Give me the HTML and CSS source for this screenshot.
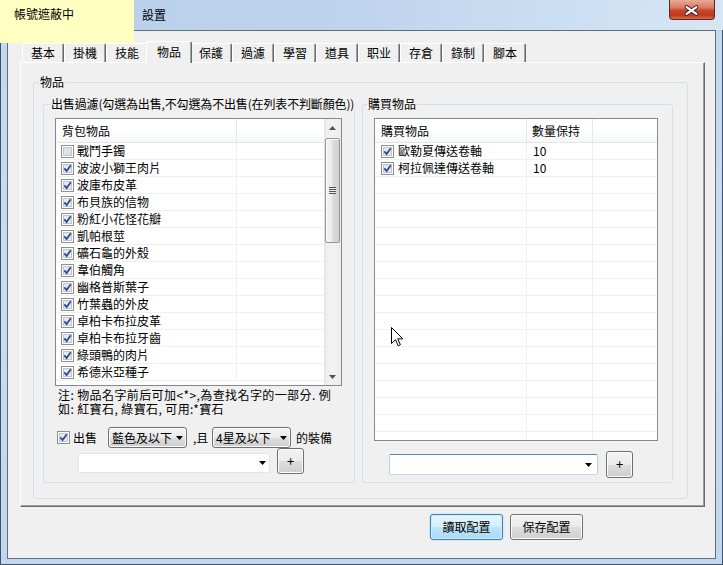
FILE: index.html
```html
<!DOCTYPE html>
<html>
<head>
<meta charset="utf-8">
<link rel="stylesheet" href="styles.css">
</head>
<body>
<div class="window">
  <div class="mask">帳號遮蔽中</div>
  <div class="titlebar">
    <span class="title">設置</span>
    <span class="close"><svg width="46" height="20" viewBox="0 0 46 20"><path d="M18 7 L28 14 M28 7 L18 14" stroke="#3a2020" stroke-width="4" stroke-linecap="round"/><path d="M18 7 L28 14 M28 7 L18 14" stroke="#fff" stroke-width="2.2" stroke-linecap="round"/></svg></span>
  </div>
  <div class="client">
    <div class="tabs">
      <div class="tab">基本</div>
      <div class="tab">掛機</div>
      <div class="tab">技能</div>
      <div class="tab active">物品</div>
      <div class="tab">保護</div>
      <div class="tab">過濾</div>
      <div class="tab">學習</div>
      <div class="tab">道具</div>
      <div class="tab">职业</div>
      <div class="tab">存倉</div>
      <div class="tab">錄制</div>
      <div class="tab">腳本</div>
    </div>
    <div class="panel">
      <fieldset class="group outer">
        <legend class="lg-outer">物品</legend>
        <div class="outer-body">
          <fieldset class="group sell">
            <legend class="lg-sell">出售過濾(勾選為出售,不勾選為不出售(在列表不判斷顏色))</legend>
            <div class="sell-body">
              <div class="lv lv-left">
                <div class="lv-main">
                  <div class="lv-head cols-left"><div class="c">背包物品</div><div class="c last"></div></div>
                  <div class="lv-row cols-left"><div class="c"><svg class="cb" viewBox="0 0 13 13"><rect x=".5" y=".5" width="12" height="12" fill="#fff" stroke="#8e8f8f"/><rect x="2.5" y="2.5" width="8" height="8" fill="#dfe1e4" stroke="#c3c6ca"/></svg><span>戰鬥手鐲</span></div><div class="c last"></div></div>
                  <div class="lv-row cols-left"><div class="c"><svg class="cb" viewBox="0 0 13 13"><rect x=".5" y=".5" width="12" height="12" fill="#fff" stroke="#8e8f8f"/><rect x="2.5" y="2.5" width="8" height="8" fill="#e6e8eb" stroke="#c3c6ca"/><path d="M3.3 6.4 L5.6 9 L9.8 3.2" fill="none" stroke="#2b4a9c" stroke-width="1.8"/></svg><span>波波小獅王肉片</span></div><div class="c last"></div></div>
                  <div class="lv-row cols-left"><div class="c"><svg class="cb" viewBox="0 0 13 13"><rect x=".5" y=".5" width="12" height="12" fill="#fff" stroke="#8e8f8f"/><rect x="2.5" y="2.5" width="8" height="8" fill="#e6e8eb" stroke="#c3c6ca"/><path d="M3.3 6.4 L5.6 9 L9.8 3.2" fill="none" stroke="#2b4a9c" stroke-width="1.8"/></svg><span>波庫布皮革</span></div><div class="c last"></div></div>
                  <div class="lv-row cols-left"><div class="c"><svg class="cb" viewBox="0 0 13 13"><rect x=".5" y=".5" width="12" height="12" fill="#fff" stroke="#8e8f8f"/><rect x="2.5" y="2.5" width="8" height="8" fill="#e6e8eb" stroke="#c3c6ca"/><path d="M3.3 6.4 L5.6 9 L9.8 3.2" fill="none" stroke="#2b4a9c" stroke-width="1.8"/></svg><span>布貝族的信物</span></div><div class="c last"></div></div>
                  <div class="lv-row cols-left"><div class="c"><svg class="cb" viewBox="0 0 13 13"><rect x=".5" y=".5" width="12" height="12" fill="#fff" stroke="#8e8f8f"/><rect x="2.5" y="2.5" width="8" height="8" fill="#e6e8eb" stroke="#c3c6ca"/><path d="M3.3 6.4 L5.6 9 L9.8 3.2" fill="none" stroke="#2b4a9c" stroke-width="1.8"/></svg><span>粉紅小花怪花瓣</span></div><div class="c last"></div></div>
                  <div class="lv-row cols-left"><div class="c"><svg class="cb" viewBox="0 0 13 13"><rect x=".5" y=".5" width="12" height="12" fill="#fff" stroke="#8e8f8f"/><rect x="2.5" y="2.5" width="8" height="8" fill="#e6e8eb" stroke="#c3c6ca"/><path d="M3.3 6.4 L5.6 9 L9.8 3.2" fill="none" stroke="#2b4a9c" stroke-width="1.8"/></svg><span>凱帕根莖</span></div><div class="c last"></div></div>
                  <div class="lv-row cols-left"><div class="c"><svg class="cb" viewBox="0 0 13 13"><rect x=".5" y=".5" width="12" height="12" fill="#fff" stroke="#8e8f8f"/><rect x="2.5" y="2.5" width="8" height="8" fill="#e6e8eb" stroke="#c3c6ca"/><path d="M3.3 6.4 L5.6 9 L9.8 3.2" fill="none" stroke="#2b4a9c" stroke-width="1.8"/></svg><span>礦石龜的外殼</span></div><div class="c last"></div></div>
                  <div class="lv-row cols-left"><div class="c"><svg class="cb" viewBox="0 0 13 13"><rect x=".5" y=".5" width="12" height="12" fill="#fff" stroke="#8e8f8f"/><rect x="2.5" y="2.5" width="8" height="8" fill="#e6e8eb" stroke="#c3c6ca"/><path d="M3.3 6.4 L5.6 9 L9.8 3.2" fill="none" stroke="#2b4a9c" stroke-width="1.8"/></svg><span>韋伯觸角</span></div><div class="c last"></div></div>
                  <div class="lv-row cols-left"><div class="c"><svg class="cb" viewBox="0 0 13 13"><rect x=".5" y=".5" width="12" height="12" fill="#fff" stroke="#8e8f8f"/><rect x="2.5" y="2.5" width="8" height="8" fill="#e6e8eb" stroke="#c3c6ca"/><path d="M3.3 6.4 L5.6 9 L9.8 3.2" fill="none" stroke="#2b4a9c" stroke-width="1.8"/></svg><span>幽格普斯葉子</span></div><div class="c last"></div></div>
                  <div class="lv-row cols-left"><div class="c"><svg class="cb" viewBox="0 0 13 13"><rect x=".5" y=".5" width="12" height="12" fill="#fff" stroke="#8e8f8f"/><rect x="2.5" y="2.5" width="8" height="8" fill="#e6e8eb" stroke="#c3c6ca"/><path d="M3.3 6.4 L5.6 9 L9.8 3.2" fill="none" stroke="#2b4a9c" stroke-width="1.8"/></svg><span>竹葉蟲的外皮</span></div><div class="c last"></div></div>
                  <div class="lv-row cols-left"><div class="c"><svg class="cb" viewBox="0 0 13 13"><rect x=".5" y=".5" width="12" height="12" fill="#fff" stroke="#8e8f8f"/><rect x="2.5" y="2.5" width="8" height="8" fill="#e6e8eb" stroke="#c3c6ca"/><path d="M3.3 6.4 L5.6 9 L9.8 3.2" fill="none" stroke="#2b4a9c" stroke-width="1.8"/></svg><span>卓柏卡布拉皮革</span></div><div class="c last"></div></div>
                  <div class="lv-row cols-left"><div class="c"><svg class="cb" viewBox="0 0 13 13"><rect x=".5" y=".5" width="12" height="12" fill="#fff" stroke="#8e8f8f"/><rect x="2.5" y="2.5" width="8" height="8" fill="#e6e8eb" stroke="#c3c6ca"/><path d="M3.3 6.4 L5.6 9 L9.8 3.2" fill="none" stroke="#2b4a9c" stroke-width="1.8"/></svg><span>卓柏卡布拉牙齒</span></div><div class="c last"></div></div>
                  <div class="lv-row cols-left"><div class="c"><svg class="cb" viewBox="0 0 13 13"><rect x=".5" y=".5" width="12" height="12" fill="#fff" stroke="#8e8f8f"/><rect x="2.5" y="2.5" width="8" height="8" fill="#e6e8eb" stroke="#c3c6ca"/><path d="M3.3 6.4 L5.6 9 L9.8 3.2" fill="none" stroke="#2b4a9c" stroke-width="1.8"/></svg><span>綠頭鴨的肉片</span></div><div class="c last"></div></div>
                  <div class="lv-row cols-left"><div class="c"><svg class="cb" viewBox="0 0 13 13"><rect x=".5" y=".5" width="12" height="12" fill="#fff" stroke="#8e8f8f"/><rect x="2.5" y="2.5" width="8" height="8" fill="#e6e8eb" stroke="#c3c6ca"/><path d="M3.3 6.4 L5.6 9 L9.8 3.2" fill="none" stroke="#2b4a9c" stroke-width="1.8"/></svg><span>希德米亞種子</span></div><div class="c last"></div></div>
                </div>
                <div class="sb">
                  <div class="sb-btn"><svg width="7" height="4" viewBox="0 0 7 4"><path d="M0 4 L3.5 0 L7 4Z" fill="#505050"/></svg></div>
                  <div class="sb-thumb"><span class="grip"></span></div>
                  <div class="sb-btn down"><svg width="7" height="4" viewBox="0 0 7 4"><path d="M0 0 L7 0 L3.5 4Z" fill="#505050"/></svg></div>
                </div>
              </div>
              <div class="note">注: 物品名字前后可加&lt;*&gt;,為查找名字的一部分. 例<br>如: 紅寶石, 綠寶石, 可用:*寶石</div>
              <div class="sell-row">
                <svg class="cb" viewBox="0 0 13 13"><rect x=".5" y=".5" width="12" height="12" fill="#fff" stroke="#8e8f8f"/><rect x="2.5" y="2.5" width="8" height="8" fill="#e6e8eb" stroke="#c3c6ca"/><path d="M3.3 6.4 L5.6 9 L9.8 3.2" fill="none" stroke="#2b4a9c" stroke-width="1.8"/></svg>
                <span class="lbl-sell">出售</span>
                <div class="dd dd1"><span>藍色及以下</span><svg class="arr" width="7" height="4" viewBox="0 0 7 4"><path d="M0 0 L7 0 L3.5 4Z" fill="#000"/></svg></div>
                <span class="lbl-and">,且</span>
                <div class="dd"><span>4星及以下</span><svg class="arr" width="7" height="4" viewBox="0 0 7 4"><path d="M0 0 L7 0 L3.5 4Z" fill="#000"/></svg></div>
                <span class="lbl-equip">的裝備</span>
              </div>
              <div class="add-row left-add">
                <div class="ecombo ecombo-left"><svg class="arr" width="7" height="4" viewBox="0 0 7 4"><path d="M0 0 L7 0 L3.5 4Z" fill="#000"/></svg></div>
                <div class="btn plus">+</div>
              </div>
            </div>
          </fieldset>
          <fieldset class="group buy">
            <legend class="lg-buy">購買物品</legend>
            <div class="buy-body">
              <div class="lv lv-right">
                <div class="lv-main">
                  <div class="lv-head cols-right"><div class="c">購買物品</div><div class="c c2">數量保持</div><div class="c last"></div></div>
                  <div class="lv-row cols-right"><div class="c cr"><svg class="cb" viewBox="0 0 13 13"><rect x=".5" y=".5" width="12" height="12" fill="#fff" stroke="#8e8f8f"/><rect x="2.5" y="2.5" width="8" height="8" fill="#e6e8eb" stroke="#c3c6ca"/><path d="M3.3 6.4 L5.6 9 L9.8 3.2" fill="none" stroke="#2b4a9c" stroke-width="1.8"/></svg><span>歐勒夏傳送卷軸</span></div><div class="c c2">10</div><div class="c last"></div></div>
                  <div class="lv-row cols-right"><div class="c cr"><svg class="cb" viewBox="0 0 13 13"><rect x=".5" y=".5" width="12" height="12" fill="#fff" stroke="#8e8f8f"/><rect x="2.5" y="2.5" width="8" height="8" fill="#e6e8eb" stroke="#c3c6ca"/><path d="M3.3 6.4 L5.6 9 L9.8 3.2" fill="none" stroke="#2b4a9c" stroke-width="1.8"/></svg><span>柯拉佩達傳送卷軸</span></div><div class="c c2">10</div><div class="c last"></div></div>
                  <div class="lv-row cols-right"><div class="c"></div><div class="c"></div><div class="c last"></div></div>
                  <div class="lv-row cols-right"><div class="c"></div><div class="c"></div><div class="c last"></div></div>
                  <div class="lv-row cols-right"><div class="c"></div><div class="c"></div><div class="c last"></div></div>
                  <div class="lv-row cols-right"><div class="c"></div><div class="c"></div><div class="c last"></div></div>
                  <div class="lv-row cols-right"><div class="c"></div><div class="c"></div><div class="c last"></div></div>
                  <div class="lv-row cols-right"><div class="c"></div><div class="c"></div><div class="c last"></div></div>
                  <div class="lv-row cols-right"><div class="c"></div><div class="c"></div><div class="c last"></div></div>
                  <div class="lv-row cols-right"><div class="c"></div><div class="c"></div><div class="c last"></div></div>
                  <div class="lv-row cols-right"><div class="c"></div><div class="c"></div><div class="c last"></div></div>
                  <div class="lv-row cols-right"><div class="c"></div><div class="c"></div><div class="c last"></div></div>
                  <div class="lv-row cols-right"><div class="c"></div><div class="c"></div><div class="c last"></div></div>
                  <div class="lv-row cols-right"><div class="c"></div><div class="c"></div><div class="c last"></div></div>
                  <div class="lv-row cols-right"><div class="c"></div><div class="c"></div><div class="c last"></div></div>
                  <div class="lv-row cols-right"><div class="c"></div><div class="c"></div><div class="c last"></div></div>
                  <div class="lv-row cols-right"><div class="c"></div><div class="c"></div><div class="c last"></div></div>
                  <div class="lv-row cols-right"><div class="c"></div><div class="c"></div><div class="c last"></div></div>
                  <div class="lv-row cols-right"><div class="c"></div><div class="c"></div><div class="c last"></div></div>
                </div>
              </div>
              <div class="add-row right-add">
                <div class="ecombo ecombo-right"><svg class="arr" width="7" height="4" viewBox="0 0 7 4"><path d="M0 0 L7 0 L3.5 4Z" fill="#000"/></svg></div>
                <div class="btn plus plus-right">+</div>
              </div>
            </div>
          </fieldset>
        </div>
      </fieldset>
    </div>
    <div class="actions">
      <div class="btn act default">讀取配置</div>
      <div class="btn act">保存配置</div>
    </div>
  </div>
  <svg class="cursor" width="13" height="20" viewBox="0 0 13 20"><path d="M0.5 0.5 L0.5 16.5 L4.5 12.7 L7.2 18.8 L9.4 17.8 L6.8 11.8 L11.8 11.8 Z" fill="#fff" stroke="#000" stroke-width="1"/></svg>
</div>
</body>
</html>
```

FILE: styles.css
```css
html, body {
  margin: 0;
  padding: 0;
}
body {
  font-family: "Noto Sans CJK TC", "Noto Sans CJK SC", sans-serif;
  font-size: 12px;
  line-height: 14px;
  color: #000;
  width: 723px;
  height: 565px;
  overflow: hidden;
}
.window {
  position: relative;
  width: 723px;
  height: 565px;
  box-sizing: border-box;
  padding: 0 7px 6px 7px;
  display: flex;
  flex-direction: column;
  background: linear-gradient(to bottom, #b9d0ea 0px, #c4d8ee 40px, #cadcf0 300px, #c2d6ec 565px);
  box-shadow: inset 0 0 0 1px #3d526b;
  overflow: hidden;
}
.mask {
  position: absolute;
  left: 0;
  top: 0;
  width: 134px;
  height: 43px;
  background: #ffffc1;
  box-sizing: border-box;
  padding: 7px 0 0 14px;
  z-index: 5;
}
.titlebar {
  height: 30px;
  display: flex;
  align-items: center;
  background: linear-gradient(100deg, #b8cfe9 0%, #bdd3ec 45%, #cadef2 75%, #d7e6f5 100%);
  margin: 0 -7px;
  padding: 0 7px;
}
.title {
  margin-left: 135px;
  padding-bottom: 1px;
}
.close {
  margin-left: auto;
  margin-right: 1px;
  align-self: flex-start;
  width: 46px;
  height: 20px;
  box-sizing: border-box;
  border: 1px solid #5b2a20;
  border-top: none;
  border-radius: 0 0 4px 4px;
  background: linear-gradient(to bottom, #e9a99a 0%, #d97a63 40%, #c8452a 55%, #c0391f 80%, #d86c4c 100%);
  display: flex;
  overflow: hidden;
}
.close svg {
  display: block;
  margin-left: -1px;
}
.client {
  flex: 1;
  background: #f0f0f0;
  border: 1px solid #5e6d80;
  display: flex;
  flex-direction: column;
}
.tabs {
  display: flex;
  align-items: flex-end;
  height: 21px;
  margin: 10px 0 0 14px;
}
.tab {
  width: 42px;
  height: 19px;
  box-sizing: border-box;
  text-align: center;
  line-height: 18px;
  border-top: 1px solid #ffffff;
  border-left: 1px solid #ffffff;
  border-right: 1px solid #6a6a6a;
  border-radius: 2px 2px 0 0;
  box-shadow: inset -1px 0 0 #a0a0a0;
  background: #f0f0f0;
}
.tab.active {
  position: relative;
  z-index: 1;
  width: 46px;
  height: 22px;
  margin: 0 -2px -1px -2px;
  line-height: 20px;
  padding-bottom: 2px;
}
.panel {
  margin-left: 12px;
  width: 685px;
  height: 445px;
  box-sizing: border-box;
  border-top: 1px solid #ffffff;
  border-left: 1px solid #ffffff;
  border-right: 1px solid #6a6a6a;
  border-bottom: 1px solid #6a6a6a;
  box-shadow: inset -1px -1px 0 #a0a0a0;
  padding: 12px 0 0 12px;
}
.group {
  margin: 0;
  padding: 0;
  min-width: 0;
  border: 1px solid #d5dfe5;
  border-radius: 3px;
  box-sizing: border-box;
}
.group legend {
  padding: 0 1px;
  line-height: 14px;
  font-size: 12px;
  white-space: nowrap;
}
.outer {
  width: 655px;
}
.lg-outer { margin-left: 5px; }
.lg-sell {
  margin-left: 6px;
  letter-spacing: -0.15px;
}
.lg-buy { margin-left: 4px; }
.outer-body {
  display: flex;
  gap: 7px;
  padding: 8px 14px 15px 9px;
}
.sell {
  width: 312px;
  flex: none;
}
.buy {
  width: 311px;
  flex: none;
}
.sell-body {
  padding: 7px 11px 8px 11px;
  display: flex;
  flex-direction: column;
}
.buy-body {
  padding: 7px 14px 4px 11px;
  display: flex;
  flex-direction: column;
}
.lv {
  border: 1px solid #828790;
  background: #ffffff;
  display: flex;
  overflow: hidden;
  box-sizing: border-box;
}
.lv-left {
  width: 287px;
  height: 268px;
}
.lv-right {
  width: 284px;
  height: 323px;
}
.lv-main {
  flex: 1;
  display: flex;
  flex-direction: column;
  overflow: hidden;
}
.lv-head {
  flex: none;
  height: 24px;
  box-sizing: border-box;
  border-bottom: 1px solid #e5e5e5;
  background: linear-gradient(to bottom, #ffffff 0%, #ffffff 50%, #f6f7f8 100%);
  display: grid;
  line-height: 23px;
}
.lv-row {
  flex: none;
  height: 17px;
  box-sizing: border-box;
  border-bottom: 1px solid #f0f0f0;
  display: grid;
  line-height: 16px;
}
.cols-left {
  grid-template-columns: 181px 1fr;
}
.cols-right {
  grid-template-columns: 152px 66px 1fr;
}
.c {
  box-sizing: border-box;
  border-right: 1px solid #f0f0f0;
  padding-left: 6px;
  display: flex;
  align-items: center;
  white-space: nowrap;
  overflow: hidden;
}
.lv-head .c {
  border-right-color: #e3e6ea;
}
.lv-row .c {
  padding-left: 5px;
}
.lv-row .cr {
  padding-left: 6px;
}
.lv-head .c2 {
  padding-left: 5px;
}
.lv-row .c2 {
  padding-left: 6px;
}
.c.last {
  border-right: none;
}
.cb {
  width: 13px;
  height: 13px;
  flex: none;
  display: block;
}
.lv-row .cb + span {
  margin-left: 3px;
}
.lv-row .cr .cb + span {
  margin-left: 4px;
}
.sb {
  width: 17px;
  flex: none;
  display: flex;
  flex-direction: column;
  background: linear-gradient(to right, #e2e2e2 0%, #efefef 15%, #f2f2f2 60%, #ececec 100%);
}
.sb-btn {
  height: 17px;
  flex: none;
  display: flex;
  align-items: center;
  justify-content: center;
}
.sb-btn svg {
  display: block;
}
.sb-btn.down {
  margin-top: auto;
}
.sb-thumb {
  margin: 2px 1px 0 1px;
  height: 105px;
  box-sizing: border-box;
  border: 1px solid #979797;
  border-radius: 2px;
  background: linear-gradient(to right, #f5f5f5 0%, #e9e9e9 45%, #dadada 55%, #d0d0d0 100%);
  box-shadow: inset 1px 1px 0 #fbfbfb;
  display: flex;
  align-items: center;
  justify-content: center;
}
.grip {
  width: 7px;
  height: 7px;
  background: repeating-linear-gradient(to bottom, #555 0px, #555 1px, #e8e8e8 1px, #e8e8e8 2px);
}
.note {
  margin-top: 2px;
  padding-left: 3px;
  line-height: 14px;
  letter-spacing: 0.4px;
  white-space: nowrap;
}
.sell-row {
  margin-top: 11px;
  height: 21px;
  display: flex;
  align-items: center;
  padding-left: 2px;
}
.lbl-sell {
  margin-left: 3px;
  width: 24px;
}
.dd {
  box-sizing: border-box;
  width: 79px;
  height: 21px;
  border: 1px solid #707070;
  border-radius: 3px;
  background: linear-gradient(to bottom, #f2f2f2 0%, #ebebeb 50%, #dddddd 51%, #cfcfcf 100%);
  box-shadow: inset 0 0 0 1px #fafafa;
  display: flex;
  align-items: center;
  padding: 0 3px 0 3px;
  white-space: nowrap;
}
.dd1 {
  margin-left: 11px;
}
.dd .arr {
  margin-left: auto;
  display: block;
}
.lbl-and {
  margin-left: 6px;
  width: 19px;
}
.lbl-equip {
  margin-left: 5px;
}
.add-row {
  display: flex;
}
.left-add {
  height: 26px;
}
.ecombo {
  box-sizing: border-box;
  background: #ffffff;
  display: flex;
  align-items: center;
  justify-content: flex-end;
}
.ecombo .arr {
  display: block;
}
.ecombo-left {
  margin-left: 23px;
  width: 192px;
  height: 20px;
  align-self: flex-end;
  margin-bottom: 1px;
  border: 1px solid #e3e5ea;
  padding-right: 3px;
}
.btn {
  box-sizing: border-box;
  border: 1px solid #707070;
  border-radius: 3px;
  background: linear-gradient(to bottom, #f2f2f2 0%, #ebebeb 50%, #dddddd 51%, #cfcfcf 100%);
  box-shadow: inset 0 0 0 1px #fbfbfb;
  display: flex;
  align-items: center;
  justify-content: center;
}
.plus {
  width: 27px;
  height: 26px;
  margin-left: 7px;
  font-size: 13px;
  padding-bottom: 1px;
}
.right-add {
  margin-top: 10px;
  height: 27px;
  align-items: center;
}
.ecombo-right {
  margin-left: 15px;
  width: 209px;
  height: 21px;
  border: 1px solid;
  border-color: #5f83b4 #b7d0ea #c5daee #b7d0ea;
  border-radius: 2px;
  padding-right: 5px;
}
.plus-right {
  height: 27px;
  margin-left: 8px;
}
.actions {
  display: flex;
  justify-content: flex-end;
  gap: 7px;
  margin: 7px 132px 0 0;
}
.act {
  width: 73px;
  height: 26px;
  padding-bottom: 1px;
}
.btn.default {
  border-color: #3c7fb1;
  background: linear-gradient(to bottom, #e5f4fc 0%, #d4eefb 50%, #bde5fa 51%, #acdaf3 100%);
  box-shadow: inset 0 0 0 1px #d2ecfa, 0 0 2px #9fd3f3;
}
.cursor {
  position: absolute;
  left: 391px;
  top: 327px;
  z-index: 6;
}
```
